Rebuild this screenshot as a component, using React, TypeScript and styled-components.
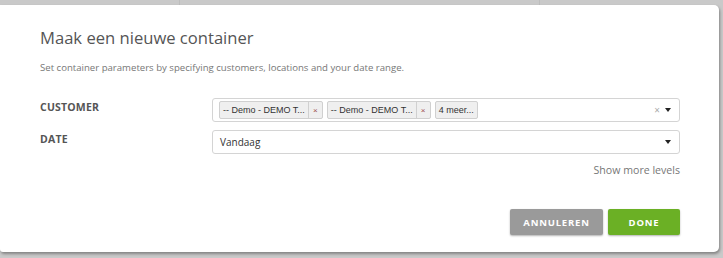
import React from "react";
import styled, { createGlobalStyle } from "styled-components";

const GlobalStyle = createGlobalStyle`
  html, body {
    margin: 0;
    padding: 0;
    background: #c9c9c9;
    font-family: "Open Sans", "Liberation Sans", sans-serif;
    overflow: hidden;
  }
`;

const Page = styled.div`
  width: 723px;
  height: 258px;
  display: flex;
  flex-direction: column;
  background: #c9c9c9;
`;

const BackStrip = styled.div`
  height: 5px;
  display: grid;
  grid-template-columns: 180px 360px 1fr;
  & > div {
    border-right: 1px solid #bdbdbd;
  }
  & > div:last-child {
    border-right: none;
  }
`;

const Modal = styled.div`
  width: 719px;
  height: 247px;
  box-sizing: border-box;
  background: #fff;
  border-radius: 0 5px 5px 3px;
  box-shadow: 1px 2px 3px rgba(0, 0, 0, 0.35);
  padding: 22px 39px 0 40px;
  display: flex;
  flex-direction: column;
`;

const Title = styled.h2`
  margin: 0;
  font-size: 16.6px;
  font-weight: 400;
  color: #555;
  line-height: 22px;
`;

const Subtitle = styled.p`
  margin: 13px 0 0;
  font-size: 9.6px;
  color: #777;
  line-height: 12px;
`;

const Form = styled.div`
  margin-top: 24px;
  display: flex;
  flex-direction: column;
  gap: 8px;
`;

const Row = styled.div`
  display: grid;
  grid-template-columns: 172px 468px;
  align-items: start;
`;

const Label = styled.label`
  font-size: 10.5px;
  font-weight: 700;
  color: #555;
  padding-top: 2px;
  letter-spacing: 0.2px;
`;

const Select = styled.div`
  height: 24px;
  box-sizing: border-box;
  border: 1px solid #d4d4d4;
  border-radius: 3px;
  display: flex;
  align-items: center;
  padding: 0 8px 0 6px;
  gap: 4px;
  background: #fff;
`;

const Value = styled.span<{ $pad?: number }>`
  flex: 1;
  font-size: 10px;
  color: #333;
  padding-left: ${(p) => p.$pad ?? 0}px;
`;

const Tag = styled.span`
  display: flex;
  height: 18px;
  box-sizing: border-box;
  border: 1px solid #d0d0d0;
  border-radius: 2px;
  background: #efefef;
  font-family: "Liberation Sans", Arial, sans-serif;
  font-size: 9px;
  color: #333;
  align-items: stretch;
`;

const TagText = styled.span`
  display: flex;
  align-items: center;
  padding: 0 3px;
`;

const TagX = styled.span`
  display: flex;
  align-items: center;
  justify-content: center;
  width: 13px;
  border-left: 1px solid #d0d0d0;
  color: #a05050;
  font-size: 8px;
`;

const Spacer = styled.span`
  flex: 1;
`;

const Clear = styled.span`
  color: #aaa;
  font-size: 10px;
  margin-right: 1px;
`;

const Caret = styled.span`
  width: 0;
  height: 0;
  border-left: 3.5px solid transparent;
  border-right: 3.5px solid transparent;
  border-top: 4px solid #222;
`;

const MoreLink = styled.div`
  width: 640px;
  text-align: right;
  font-size: 10.6px;
  line-height: 14px;
  color: #777;
  margin-top: 9px;
`;

const Actions = styled.div`
  width: 640px;
  display: flex;
  justify-content: flex-end;
  gap: 5px;
  margin-top: 32px;
`;

const Button = styled.button<{ $variant: "cancel" | "done"; $width: number }>`
  width: ${(p) => p.$width}px;
  height: 26px;
  border: none;
  border-radius: 2px;
  background: ${(p) => (p.$variant === "done" ? "#6bb025" : "#9a9a9a")};
  color: #fff;
  font-family: "Open Sans", sans-serif;
  font-weight: 700;
  font-size: 9.5px;
  letter-spacing: 0.8px;
  box-shadow: 0 1px 2px rgba(0, 0, 0, 0.3);
  cursor: pointer;
`;

const tags = ["-- Demo - DEMO T...", "-- Demo - DEMO T..."];

export default function App() {
  return (
    <Page>
      <GlobalStyle />
      <BackStrip>
        <div />
        <div />
        <div />
      </BackStrip>
      <Modal>
        <Title>Maak een nieuwe container</Title>
        <Subtitle>
          Set container parameters by specifying customers, locations and your date range.
        </Subtitle>
        <Form>
          <Row>
            <Label>CUSTOMER</Label>
            <Select>
              {tags.map((t, i) => (
                <Tag key={i}>
                  <TagText>{t}</TagText>
                  <TagX>×</TagX>
                </Tag>
              ))}
              <Tag>
                <TagText>4 meer...</TagText>
              </Tag>
              <Spacer />
              <Clear>×</Clear>
              <Caret />
            </Select>
          </Row>
          <Row>
            <Label>DATE</Label>
            <Select>
              <Value $pad={1}>Vandaag</Value>
              <Caret />
            </Select>
          </Row>
        </Form>
        <MoreLink>Show more levels</MoreLink>
        <Actions>
          <Button $variant="cancel" $width={93}>ANNULEREN</Button>
          <Button $variant="done" $width={72}>DONE</Button>
        </Actions>
      </Modal>
    </Page>
  );
}
